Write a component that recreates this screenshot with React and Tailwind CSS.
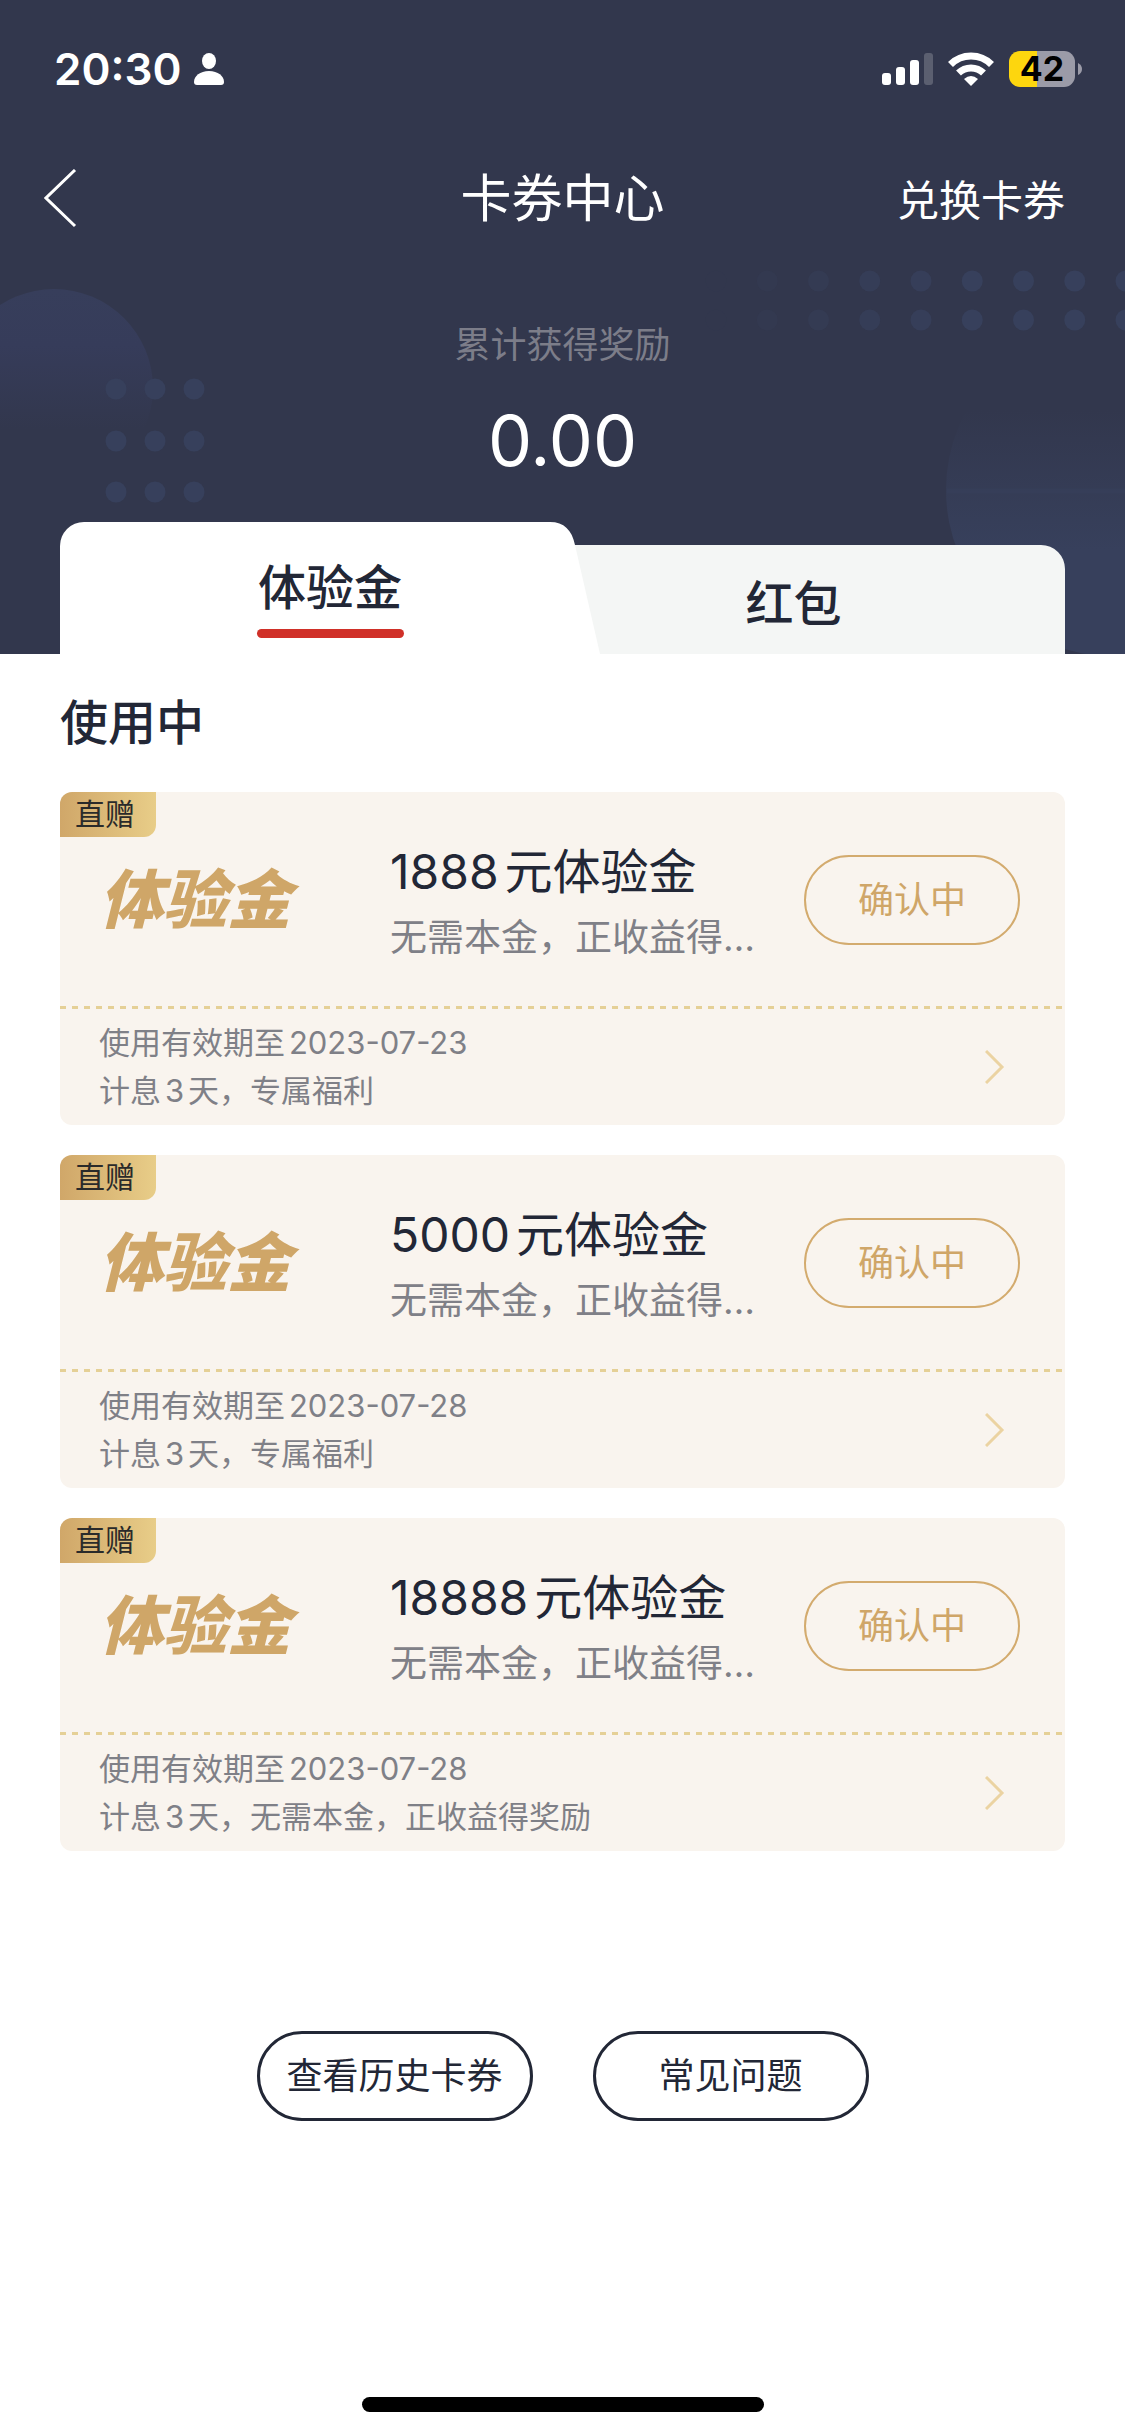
/**
 * Coupon center page: reward total, tabs, coupon cards and footer links.
 */
import { useState } from "react";

const COUPONS = [
  { id: 1, amount: "1888", expires: "2023-07-23", days: "3", note: "专属福利" },
  { id: 2, amount: "5000", expires: "2023-07-28", days: "3", note: "专属福利" },
  { id: 3, amount: "18888", expires: "2023-07-28", days: "3", note: "无需本金，正收益得奖励" },
];

const RIGHT_DOTS = [0.08, 0.25, 0.45, 0.65, 0.85, 1, 1, 1, 1];

function StatusBar() {
  return (
    <div className="flex h-[138px] items-center justify-between pl-[54px] pr-[43px]">
      <div className="flex items-center gap-3">
        <span className="text-[44px] font-semibold leading-[54px]">20:30</span>
        <svg width="30" height="34" viewBox="0 0 30 34" fill="currentColor" aria-hidden="true">
          <ellipse cx="15" cy="9" rx="7" ry="8" />
          <path d="M3 33C1 33 0 32 0 30C0 24 6 19 15 19S30 24 30 30C30 32 29 33 27 33Z" />
        </svg>
      </div>
      <div className="flex items-center gap-[15px]">
        <svg width="51" height="34" viewBox="0 0 51 34" fill="currentColor" aria-hidden="true">
          <rect x="0" y="21" width="9" height="12" rx="3" />
          <rect x="14" y="15" width="9" height="18" rx="3" />
          <rect x="28" y="8" width="9" height="25" rx="3" />
          <rect x="42" y="1" width="9" height="32" rx="3" opacity="0.2" />
        </svg>
        <svg width="46" height="34" viewBox="0 0 46 34" aria-hidden="true">
          <g fill="none" stroke="currentColor" strokeWidth="7">
            <path d="M2.5 12.5A29 29 0 0 1 43.5 12.5" />
            <path d="M10.5 21A18 18 0 0 1 35.5 21" />
          </g>
          <path d="M23 34L16 27Q23 21 30 27Z" fill="currentColor" />
        </svg>
        <div className="flex items-center gap-[3px]">
          <div className="flex h-9 w-[66px] items-center justify-center rounded-[11px] bg-linear-to-r from-[#fdd60e] from-42% to-[#9b9ba8] to-42% text-[34px] font-bold leading-9 text-black">
            42
          </div>
          <svg width="4" height="12" viewBox="0 0 4 12" aria-hidden="true">
            <path d="M0 0Q4 2 4 6T0 12Z" fill="#9b9ba8" />
          </svg>
        </div>
      </div>
    </div>
  );
}

function HeaderArt() {
  return (
    <>
      <svg className="absolute left-0 top-[280px]" width="220" height="240" viewBox="0 0 220 240" aria-hidden="true">
        <defs>
          <linearGradient id="leftFade" x1="0" y1="9" x2="0" y2="150" gradientUnits="userSpaceOnUse">
            <stop offset="0" stopColor="#373e5b" />
            <stop offset="0.4" stopColor="#363c5a" />
            <stop offset="1" stopColor="#363c5a" stopOpacity="0" />
          </linearGradient>
        </defs>
        <circle cx="54" cy="108" r="99" fill="url(#leftFade)" />
        {[109, 161, 212].map((cy) =>
          [116, 155, 194].map((cx) => <circle key={`${cx}-${cy}`} cx={cx} cy={cy} r="10.5" fill="#37405c" />)
        )}
      </svg>
      <svg className="absolute right-0 top-[260px]" width="425" height="394" viewBox="0 0 425 394" aria-hidden="true">
        <defs>
          <linearGradient id="rightFade" x1="0" y1="150" x2="0" y2="290" gradientUnits="userSpaceOnUse">
            <stop offset="0" stopColor="#37405c" stopOpacity="0" />
            <stop offset="1" stopColor="#37405c" />
          </linearGradient>
        </defs>
        {[21, 60].map((cy) =>
          RIGHT_DOTS.map((opacity, i) => (
            <circle key={`${cy}-${i}`} cx={16 + i * 51.25} cy={cy} r="10.5" fill="#37405c" opacity={opacity} />
          ))
        )}
        <circle cx="412" cy="230" r="166" fill="url(#rightFade)" />
        <path d="M247 231H425" stroke="#37405c" strokeWidth="5" opacity="0.5" />
      </svg>
    </>
  );
}

function Tabs({ active, onChange }) {
  return (
    <div role="tablist" className="relative mx-[60px] flex items-end text-[48px] font-medium leading-[60px] text-[#222736]">
      <button
        role="tab"
        aria-selected={active === "bonus"}
        onClick={() => onChange("bonus")}
        className="relative z-10 flex h-[132px] flex-[540_1_0%] flex-col items-center pt-[36px]"
      >
        <span className="absolute inset-y-0 left-0 right-[59px] rounded-tl-[24px] bg-white" />
        <svg className="absolute right-0 top-0" width="60" height="132" viewBox="0 0 60 132" aria-hidden="true">
          <path d="M0 0H10C24 0 32 8 35 23L60 132H0Z" fill="#fff" />
        </svg>
        <span className="relative">体验金</span>
        <span className="relative mt-[11px] h-[9px] w-[147px] rounded-full bg-[#d03028]" />
      </button>
      <button
        role="tab"
        aria-selected={active === "packet"}
        onClick={() => onChange("packet")}
        className="-ml-[78px] h-[109px] flex-[543_1_0%] rounded-t-[24px] bg-[#f4f6f5] pt-2"
      >
        红包
      </button>
    </div>
  );
}

function CouponCard({ coupon }) {
  return (
    <li className="relative overflow-hidden rounded-xl bg-[#f9f4ee]">
      <span className="absolute left-0 top-0 flex h-[45px] w-24 items-center rounded-br-xl bg-linear-to-r from-[#d0a769] to-[#e8cd88] pl-[15px] text-[30px] text-[#2a2a2a]">
        直赠
      </span>

      {/* ── Amount ── */}
      <div className="flex h-[214px] items-center pl-[39px] pr-[45px] pt-[2px]">
        <div className="w-[291px] shrink-0 text-[64px] font-black italic leading-[72px] text-[#cfa668]">体验金</div>
        <div className="min-w-0 flex-1 pt-[10px]">
          <h3 className="text-[48px] leading-[66px] text-[#222736] [text-autospace:normal]">{coupon.amount}元体验金</h3>
          <p className="truncate text-[37px] leading-[66px] text-[#7f8087]">无需本金，正收益得…</p>
        </div>
        <button className="h-[90px] w-[216px] shrink-0 rounded-full border-2 border-[#d3ab6e] text-[36px] text-[#cfa668]">
          确认中
        </button>
      </div>

      <div className="h-[3px] bg-[repeating-linear-gradient(90deg,#e5d096_0_6px,transparent_6px_12px)]" />

      {/* ── Validity ── */}
      <div className="flex h-[116px] items-center justify-between pl-[39px] pr-[60px]">
        <div className="text-[31px] leading-[48px] text-[#7f8087] [text-autospace:normal]">
          <p>使用有效期至{coupon.expires}</p>
          <p>计息{coupon.days}天，{coupon.note}</p>
        </div>
        <button aria-label="查看详情">
          <svg width="20" height="34" viewBox="0 0 20 34" fill="none" stroke="#ebd3a2" strokeWidth="3" aria-hidden="true">
            <path d="M1 1L17 17L1 33" />
          </svg>
        </button>
      </div>
    </li>
  );
}

export default function App() {
  const [tab, setTab] = useState("bonus");

  return (
    <div className="flex min-h-screen flex-col bg-white font-['Inter','Noto_Sans_CJK_SC',sans-serif]" lang="zh-CN">
      <header className="relative overflow-hidden bg-[#32374d] text-white">
        <HeaderArt />
        <div className="relative">
          <StatusBar />

          {/* ── Nav ── */}
          <nav className="grid h-[120px] grid-cols-3 items-center px-[60px] pt-[2px]">
            <button aria-label="返回" className="-ml-4 justify-self-start">
              <svg width="34" height="60" viewBox="0 0 34 60" fill="none" stroke="currentColor" strokeWidth="3" aria-hidden="true">
                <path d="M31 1L2 29L31 57" />
              </svg>
            </button>
            <h1 className="justify-self-center text-[51px] leading-[60px]">卡券中心</h1>
            <a href="#redeem" className="justify-self-end pt-1 text-[42px] leading-[60px]">兑换卡券</a>
          </nav>

          {/* ── Reward total ── */}
          <div className="flex h-[264px] flex-col items-center pt-[60px]">
            <p className="text-[36px] leading-[54px] text-[#7c7d89]">累计获得奖励</p>
            <p className="mt-6 text-[70px] leading-[90px]">0.00</p>
          </div>

          <Tabs active={tab} onChange={setTab} />
        </div>
      </header>

      <main className="flex flex-col px-[60px]">
        <h2 className="flex h-[138px] items-center text-[48px] font-medium text-[#222736]">使用中</h2>
        <ul className="flex flex-col gap-[30px]">
          {COUPONS.map((c) => (
            <CouponCard key={c.id} coupon={c} />
          ))}
        </ul>
        <div className="mt-[180px] flex justify-center gap-[60px] text-[36px] text-[#222736]">
          <button className="h-[90px] w-[276px] rounded-full border-3 border-[#222736]">查看历史卡券</button>
          <button className="h-[90px] w-[276px] rounded-full border-3 border-[#222736]">常见问题</button>
        </div>
      </main>

      <div className="mx-auto mb-6 mt-auto h-[15px] w-[402px] rounded-full bg-black" />
    </div>
  );
}
